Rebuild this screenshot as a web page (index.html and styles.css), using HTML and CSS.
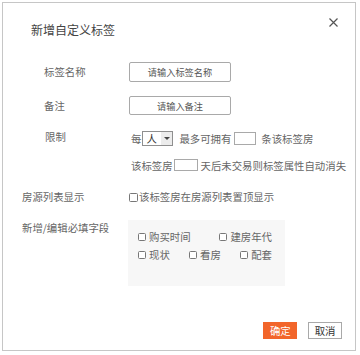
FILE: index.html
```html
<!DOCTYPE html>
<html lang="zh-CN">
<head>
    <meta charset="UTF-8">
    <meta name="viewport" content="width=device-width, initial-scale=1.0">
    <title>新增自定义标签</title>
    <link rel="stylesheet" href="styles.css">
</head>
<body>
    <div class="dialog">
        <div class="dialog-header">
            <h3 class="dialog-title">新增自定义标签</h3>
            <span class="close">
                <svg width="9" height="9" viewBox="0 0 9 9"><path d="M0.5 0.5L8.5 8.5M8.5 0.5L0.5 8.5" stroke="#555" stroke-width="1.2" fill="none"/></svg>
            </span>
        </div>

        <form class="tag-form">
            <div class="row row-name">
                <label class="label indent">标签名称</label>
                <input type="text" class="text-input" placeholder="请输入标签名称">
            </div>

            <div class="row row-remark">
                <label class="label indent">备注</label>
                <input type="text" class="text-input" placeholder="请输入备注">
            </div>

            <div class="row row-limit">
                <label class="label indent-2">限制</label>
                <div class="limit">
                    <div class="limit-line first">
                        <span class="t-each">每</span>
                        <span class="select">
                            <span class="select-val">人</span>
                            <span class="select-arrow"></span>
                        </span>
                        <span class="t-most">最多可拥有</span>
                        <input type="text" class="num-input num-a">
                        <span class="t-after">条该标签房</span>
                    </div>
                    <div class="limit-line second">
                        <span class="t-each">该标签房</span>
                        <input type="text" class="num-input num-b">
                        <span class="t-after-b">天后未交易则标签属性自动消失</span>
                    </div>
                </div>
            </div>

            <div class="row row-top">
                <label class="label">房源列表显示</label>
                <label class="check"><input type="checkbox">该标签房在房源列表置顶显示</label>
            </div>

            <div class="row row-fields">
                <label class="label">新增/编辑必填字段</label>
                <div class="fields">
                    <div class="fields-line">
                        <label class="check"><input type="checkbox">购买时间</label>
                        <label class="check"><input type="checkbox">建房年代</label>
                    </div>
                    <div class="fields-line">
                        <label class="check"><input type="checkbox">现状</label>
                        <label class="check"><input type="checkbox">看房</label>
                        <label class="check"><input type="checkbox">配套</label>
                    </div>
                </div>
            </div>
        </form>

        <div class="dialog-footer">
            <button type="button" class="btn btn-primary">确定</button>
            <button type="button" class="btn">取消</button>
        </div>
    </div>
</body>
</html>
```

FILE: styles.css
```css
* {
    box-sizing: border-box;
}

body {
    margin: 0;
    background: #fff;
    font-family: "Noto Sans CJK SC", "Noto Sans", sans-serif;
    font-size: 10.4px;
    color: #666;
}

.dialog {
    margin: 2px;
    width: 354px;
    height: 349px;
    border: 1px solid #c6c6c6;
    display: flex;
    flex-direction: column;
}

.dialog-header {
    display: flex;
    justify-content: space-between;
    align-items: flex-start;
    padding: 15px 17px 0 28px;
}

.dialog-title {
    margin: 4px 0 0;
    font-size: 12px;
    line-height: 16px;
    font-weight: normal;
    color: #444;
}

.close {
    display: block;
    width: 9px;
    height: 9px;
    cursor: pointer;
}

.close svg {
    display: block;
}

.tag-form {
    padding-left: 19px;
    margin-top: 24px;
}

.row {
    display: flex;
    align-items: center;
}

.label {
    width: 107px;
    flex-shrink: 0;
    line-height: 16px;
}

.indent {
    padding-left: 22px;
}

.indent-2 {
    padding-left: 23px;
}

.row-name {
    height: 20px;
}

.row-remark {
    height: 19px;
    margin-top: 14px;
}

.text-input {
    width: 102px;
    height: 100%;
    border: 1px solid #a9a9a9;
    border-radius: 2px;
    padding: 0;
    font-family: inherit;
    font-size: 9.2px;
    text-align: center;
    outline: none;
}

.text-input::placeholder {
    color: #555;
}

.row-limit {
    align-items: flex-start;
    margin-top: 15px;
}

.row-limit .label {
    line-height: 14px;
}

.limit-line {
    display: flex;
    align-items: center;
    white-space: nowrap;
}

.limit-line.first {
    height: 17px;
}

.limit-line.second {
    height: 16px;
    margin-top: 10px;
}

.t-each {
    margin-left: 2px;
}

.select {
    display: inline-flex;
    width: 31px;
    height: 15px;
    margin-left: 1px;
    border: 1px solid #8f8f8f;
    background: #fff;
}

.select-val {
    flex: 1;
    color: #333;
    line-height: 13px;
    padding-left: 3px;
}

.select-arrow {
    width: 11px;
    background: #ececec;
    position: relative;
}

.select-arrow::after {
    content: "";
    position: absolute;
    left: 3px;
    top: 5px;
    border-left: 3px solid transparent;
    border-right: 3px solid transparent;
    border-top: 3px solid #444;
}

.t-most {
    margin-left: 6px;
}

.num-input {
    border: 1px solid #a9a9a9;
    padding: 0;
    outline: none;
}

.num-a {
    width: 22px;
    height: 13px;
    margin-left: 3px;
}

.num-b {
    width: 24px;
    height: 12px;
    margin-left: 1px;
}

.t-after {
    margin-left: 5px;
}

.t-after-b {
    margin-left: 3px;
}

.row-top {
    height: 16px;
    margin-top: 16px;
}

.check {
    display: inline-flex;
    align-items: center;
    white-space: nowrap;
    line-height: 14px;
}

.check input {
    appearance: none;
    width: 8px;
    height: 8px;
    margin: 0 3px 0 0;
    border: 1px solid #777;
    border-radius: 1.5px;
    background: #fff;
}

.row-top .check input {
    width: 9px;
    height: 9px;
    margin-right: 1px;
}

.row-fields {
    align-items: flex-start;
    margin-top: 15px;
}

.fields {
    width: 157px;
    height: 66px;
    margin-left: -1px;
    padding: 10px 13px 0 10px;
    background: #f7f7f7;
}

.fields-line {
    display: flex;
    justify-content: space-between;
}

.fields-line + .fields-line {
    margin-top: 4px;
}

.dialog-footer {
    margin-top: auto;
    display: flex;
    justify-content: flex-end;
    gap: 11px;
    padding: 0 13px 11px 0;
}

.btn {
    height: 17px;
    padding: 0 5.5px;
    border: 1px solid #a9a9a9;
    border-radius: 0;
    background: #fff;
    color: #333;
    font-family: inherit;
    font-size: 10.4px;
    line-height: 15px;
    cursor: pointer;
}

.btn-primary {
    background: #f2652a;
    border-color: #f2652a;
    color: #fff;
}
```
